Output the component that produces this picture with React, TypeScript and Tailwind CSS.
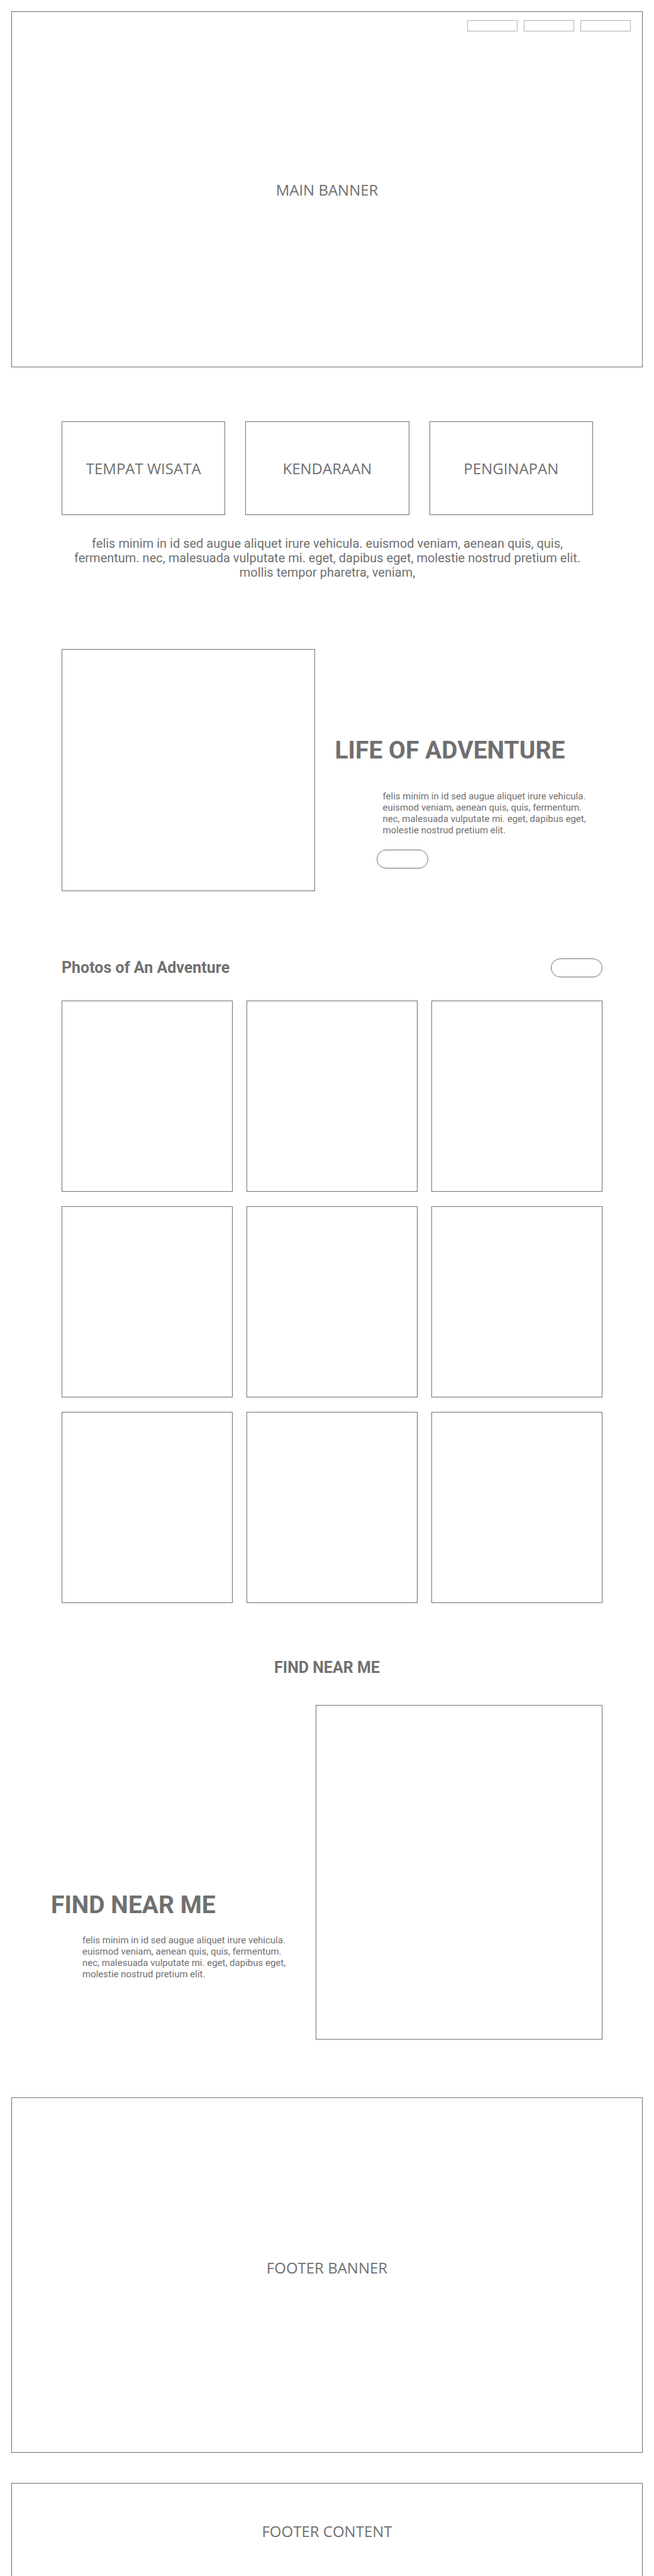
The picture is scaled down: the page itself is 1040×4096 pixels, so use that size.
const NAV = ["Home", "Destinations", "Contact"];
const SERVICES = ["TEMPAT WISATA", "KENDARAAN", "PENGINAPAN"];
const PHOTOS = [1, 2, 3, 4, 5, 6, 7, 8, 9];
const BLURB =
  "felis minim in id sed augue aliquet irure vehicula. euismod veniam, aenean quis, quis, fermentum. nec, malesuada vulputate mi. eget, dapibus eget, molestie nostrud pretium elit.";

function PillButton({ label }: { label: string }) {
  return (
    <button
      type="button"
      aria-label={label}
      className="h-[30px] w-[82px] shrink-0 rounded-full border border-[#707070]"
    />
  );
}

export default function App() {
  return (
    <div className="bg-white pt-[18px] font-['Roboto',sans-serif] text-[#707070]">
      <header className="mx-[18px] grid min-h-[566px] border border-[#707070]">
        <nav className="col-start-1 row-start-1 mr-[18px] mt-[13px] flex gap-[10px] self-start justify-self-end">
          {NAV.map((item) => (
            <a
              key={item}
              href="#"
              aria-label={item}
              className="h-[18px] w-[80px] border border-[#b2b2b2]"
            />
          ))}
        </nav>
        <h1 className="col-start-1 row-start-1 self-center justify-self-center pt-[2px] font-['Open_Sans',sans-serif] text-2xl">
          MAIN BANNER
        </h1>
      </header>

      <main>
        <section className="mt-[86px] pl-[98px] pr-[97px]">
          <div className="grid grid-cols-3 gap-8">
            {SERVICES.map((service) => (
              <div
                key={service}
                className="flex min-h-[149px] items-center justify-center border border-[#707070] font-['Open_Sans',sans-serif] text-2xl"
              >
                {service}
              </div>
            ))}
          </div>
          <p className="mx-auto mt-[34px] max-w-[820px] text-center text-[20px] leading-[23px]">
            {BLURB} mollis tempor pharetra, veniam,
          </p>
        </section>

        <section className="mt-[110px] grid grid-cols-[403fr_426fr] gap-8 pl-[98px] pr-[82px]">
          <div className="min-h-[385px] border border-[#707070]" />
          <div className="pt-[137px]">
            <h2 className="text-[39px] font-bold leading-[48px]">LIFE OF ADVENTURE</h2>
            <p className="ml-[76px] mt-10 max-w-[336px] text-[15px] leading-[18px]">{BLURB}</p>
            <div className="ml-[66px] mt-[22px] flex">
              <PillButton label="Read more" />
            </div>
          </div>
        </section>

        <section className="mt-[107px] pl-[98px] pr-[82px]">
          <div className="flex items-center justify-between">
            <h2 className="text-[25px] font-bold leading-[30px]">Photos of An Adventure</h2>
            <PillButton label="See all photos" />
          </div>
          <div className="mt-[37px] grid grid-cols-3 gap-x-[22px] gap-y-[23px]">
            {PHOTOS.map((photo) => (
              <div key={photo} className="min-h-[304px] border border-[#707070]" />
            ))}
          </div>
        </section>

        <section className="mt-[88px]">
          <h2 className="text-center text-[25px] font-bold leading-[30px]">FIND NEAR ME</h2>
          <div className="mt-11 grid grid-cols-[421fr_456fr] pl-[81px] pr-[82px]">
            <div className="pt-[294px]">
              <h3 className="text-[39px] font-bold leading-[48px]">FIND NEAR ME</h3>
              <p className="ml-[50px] mt-[23px] max-w-[336px] text-[15px] leading-[18px]">{BLURB}</p>
            </div>
            <div className="min-h-[532px] border border-[#707070]" />
          </div>
        </section>

        <section className="mx-[18px] mt-[92px] flex min-h-[565px] items-center justify-center border border-[#707070] pb-6 font-['Open_Sans',sans-serif] text-2xl">
          FOOTER BANNER
        </section>
      </main>

      <footer className="mx-[18px] mt-12 flex min-h-[148px] items-center justify-center border border-b-0 border-[#707070] pt-1 font-['Open_Sans',sans-serif] text-2xl">
        FOOTER CONTENT
      </footer>
    </div>
  );
}
